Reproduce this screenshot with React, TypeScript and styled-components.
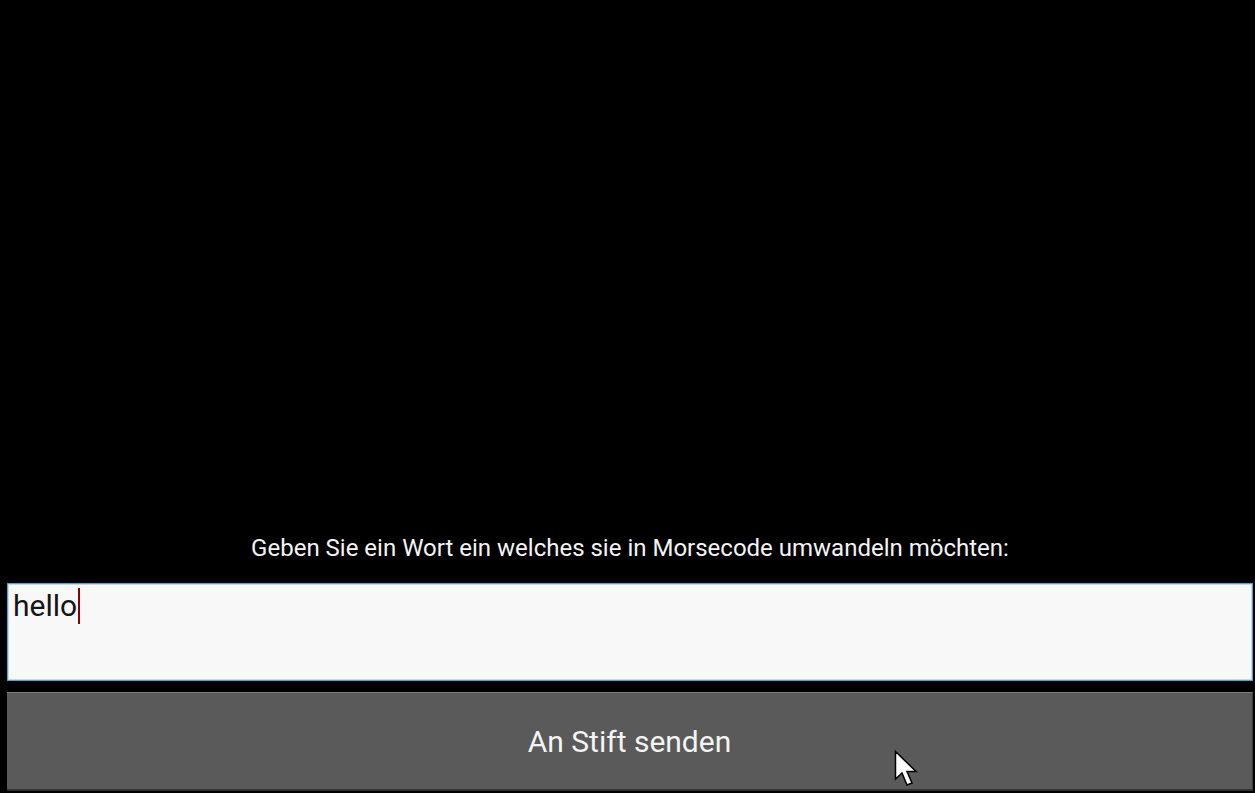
import React from "react";
import styled, { createGlobalStyle } from "styled-components";

const Global = createGlobalStyle`
  html, body { margin: 0; padding: 0; background: #000; }
  body { font-family: Roboto, "Noto Sans", sans-serif; }
  * { box-sizing: border-box; }
`;

const Screen = styled.div`
  position: relative;
  width: 1255px;
  height: 793px;
  background: #000;
  display: flex;
  flex-direction: column;
  justify-content: flex-end;
  padding: 0 2px 2px 7px;
`;

const Prompt = styled.div`
  color: #f4f4f4;
  font-size: 24px;
  text-align: center;
  line-height: 28px;
  margin-bottom: 21px;
`;

const Field = styled.div`
  height: 98px;
  background: #f8f8f8;
  border: 1px solid #4aa6d6;
  box-shadow: inset 0 0 0 1px #c8d8e0;
  padding: 4px 5px;
  font-size: 30px;
  color: #141414;
  line-height: 36px;
  display: flex;
  align-items: flex-start;
`;

const Caret = styled.span`
  display: inline-block;
  width: 2px;
  height: 36px;
  background: #8b0000;
  margin-left: 1px;
`;

const SendButton = styled.button`
  margin-top: 11px;
  height: 99px;
  width: 100%;
  background: #5a5a5a;
  border: none;
  border-top: 1px solid #7c7c7c;
  border-bottom: 2px solid #333;
  border-right: 1px solid #3c3c3c;
  color: #f4f4f4;
  font-family: Roboto, "Noto Sans", sans-serif;
  font-size: 30px;
  padding: 0;
  display: flex;
  align-items: center;
  justify-content: center;
`;

const Pointer = styled.svg`
  position: absolute;
  left: 894px;
  top: 750px;
`;

export default function App() {
  return (
    <>
      <Global />
      <Screen>
        <Prompt>Geben Sie ein Wort ein welches sie in Morsecode umwandeln möchten:</Prompt>
        <Field>
          hello<Caret />
        </Field>
        <SendButton>An Stift senden</SendButton>
        <Pointer width="30" height="42" viewBox="0 0 30 42">
          <path d="M1.5 1.5 L1.5 29 L8 23 L13 35 L18 33 L13 21.5 L22 21.5 Z" fill="#fff" stroke="#000" strokeWidth="1.5" strokeLinejoin="miter" />
        </Pointer>
      </Screen>
    </>
  );
}
